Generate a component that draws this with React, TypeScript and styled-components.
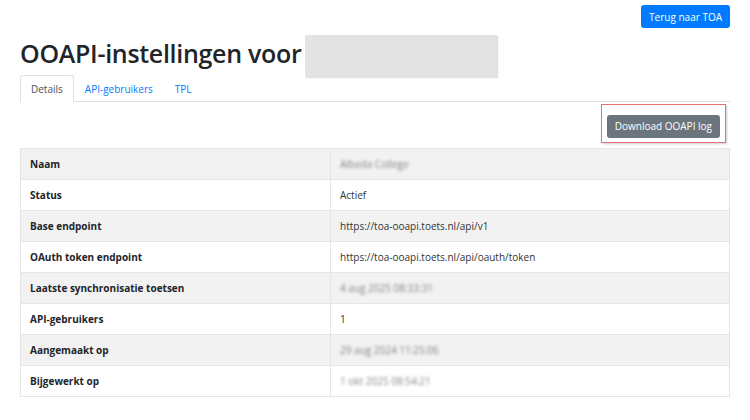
import React from 'react';
import styled, { createGlobalStyle } from 'styled-components';

const GlobalStyle = createGlobalStyle`
    body {
        margin: 0;
        background: #fff;
        font-family: 'Open Sans', 'Noto Sans', Arial, sans-serif;
        color: #212529;
    }
`;

const rows: { label: string; value: string; blurred?: boolean }[] = [
    { label: 'Naam', value: 'Albeda College', blurred: true },
    { label: 'Status', value: 'Actief' },
    { label: 'Base endpoint', value: 'https://toa-ooapi.toets.nl/api/v1' },
    { label: 'OAuth token endpoint', value: 'https://toa-ooapi.toets.nl/api/oauth/token' },
    { label: 'Laatste synchronisatie toetsen', value: '4 aug 2025 08:33:31', blurred: true },
    { label: 'API-gebruikers', value: '1' },
    { label: 'Aangemaakt op', value: '29 aug 2024 11:25:06', blurred: true },
    { label: 'Bijgewerkt op', value: '1 okt 2025 08:54:21', blurred: true },
];

export default function App() {
    return (
        <>
            <GlobalStyle />
            <Page>
                <TopBar>
                    <Button $variant="primary">Terug naar TOA</Button>
                </TopBar>
                <Title>
                    OOAPI-instellingen voor
                    <Redacted />
                </Title>
                <Tabs>
                    <Tab $active>Details</Tab>
                    <Tab>API-gebruikers</Tab>
                    <Tab>TPL</Tab>
                </Tabs>
                <Toolbar>
                    <Highlight>
                        <Button $variant="secondary">Download OOAPI log</Button>
                    </Highlight>
                </Toolbar>
                <Table>
                    <tbody>
                        {rows.map((row) => (
                            <tr key={row.label}>
                                <Th>{row.label}</Th>
                                <Td $blurred={row.blurred}>{row.value}</Td>
                            </tr>
                        ))}
                    </tbody>
                </Table>
            </Page>
        </>
    );
}

const Page = styled.div`
    padding: 5px 20px 0 20px;
`;

const TopBar = styled.div`
    display: flex;
    justify-content: flex-end;
`;

const Button = styled.button<{ $variant: 'primary' | 'secondary' }>`
    font-family: inherit;
    font-size: 10px;
    line-height: 1;
    color: #fff;
    border: none;
    border-radius: 3px;
    padding: 0 8px;
    height: 23px;
    background: ${(p) => (p.$variant === 'primary' ? '#007bff' : '#6c757d')};
    cursor: pointer;
`;

const Title = styled.h2`
    display: flex;
    align-items: center;
    margin: 2px 0 0 0;
    height: 45px;
    font-size: 25px;
    font-weight: 600;
    letter-spacing: -0.3px;
`;

const Redacted = styled.span`
    display: inline-block;
    align-self: flex-end;
    width: 192px;
    height: 42px;
    margin: 0 0 -2px 4px;
    background: #e3e3e3;
    box-shadow: 1px 1px 1px rgba(0, 0, 0, 0.12);
`;

const Tabs = styled.nav`
    display: flex;
    height: 26px;
    border-bottom: 1px solid #dee2e6;
`;

const Tab = styled.a<{ $active?: boolean }>`
    display: flex;
    align-items: center;
    padding: 0 ${(p) => (p.$active ? '10px' : '11px')};
    margin-bottom: -1px;
    font-size: 10px;
    color: ${(p) => (p.$active ? '#495057' : '#007bff')};
    background: ${(p) => (p.$active ? '#fff' : 'none')};
    border: ${(p) => (p.$active ? '1px solid #dee2e6' : 'none')};
    border-bottom-color: #fff;
    border-radius: 3px 3px 0 0;
`;

const Toolbar = styled.div`
    display: flex;
    justify-content: flex-end;
    padding: 2px 4px 5px 0;
`;

const Highlight = styled.div`
    padding: 8px 5px 4px 5px;
    border: 1px solid #e57373;
    box-shadow: 1px 1px 2px rgba(0, 0, 0, 0.2);
`;

const Table = styled.table`
    width: 100%;
    border-collapse: collapse;
    font-size: 10px;

    tr:nth-child(odd) {
        background: #f2f2f2;
    }
`;

const Th = styled.th`
    width: 310px;
    text-align: left;
    font-weight: 700;
    height: 30px;
    padding: 0 9px;
    border: 1px solid #e6e6e6;
    box-sizing: border-box;
`;

const Td = styled.td<{ $blurred?: boolean }>`
    height: 30px;
    padding: 0 9px;
    border: 1px solid #e6e6e6;
    color: #333;
    filter: ${(p) => (p.$blurred ? 'blur(1.4px)' : 'none')};
    opacity: ${(p) => (p.$blurred ? 0.6 : 1)};
`;
